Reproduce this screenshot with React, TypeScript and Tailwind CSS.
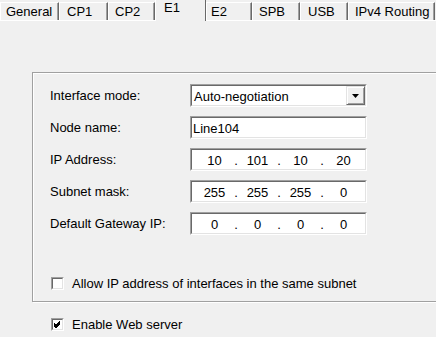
import { ReactNode } from "react";

type Tab = { label: string; width: number; pad: number; active?: boolean };

const tabs: Tab[] = [
  { label: "General", width: 59, pad: 5 },
  { label: "CP1", width: 49, pad: 7 },
  { label: "CP2", width: 47, pad: 6 },
  { label: "E1", width: 51, pad: 8, active: true },
  { label: "E2", width: 46, pad: 4 },
  { label: "SPB", width: 48, pad: 6 },
  { label: "USB", width: 48, pad: 7 },
  { label: "IPv4 Routing", width: 87, pad: 6 },
];

const Sunken = ({ width, children }: { width: number; children: ReactNode }) => (
  <div
    className="h-[23px] border border-t-[#a0a0a0] border-l-[#a0a0a0] border-b-white border-r-white"
    style={{ width }}
  >
    <div className="relative h-full border border-t-[#696969] border-l-[#696969] border-b-[#e3e3e3] border-r-[#e3e3e3] bg-white">
      {children}
    </div>
  </div>
);

const IpBox = ({ parts }: { parts: string[] }) => (
  <Sunken width={177}>
    <div className="flex h-full pl-[1px] pt-[3px] leading-[15px]">
      {parts.map((part, i) => (
        <div key={i} className="flex">
          {i > 0 ? (
            <span className="flex w-0 justify-center">
              <span>.</span>
            </span>
          ) : null}
          <span className="w-[43px] text-center">{part}</span>
        </div>
      ))}
    </div>
  </Sunken>
);

const Checkbox = ({ checked }: { checked?: boolean }) => (
  <div className="h-[13px] w-[13px] shrink-0 border border-t-[#a0a0a0] border-l-[#a0a0a0] border-b-white border-r-white">
    <div className="h-full w-full border border-t-[#696969] border-l-[#696969] border-b-[#e3e3e3] border-r-[#e3e3e3] bg-white">
      {checked ? (
        <svg width="9" height="9" viewBox="0 0 9 9" className="block">
          <path d="M1 3.5 L3 5.5 L7 1.5 M1 4.5 L3 6.5 L7 2.5 M1 5.5 L3 7.5 L7 3.5" stroke="#000" strokeWidth="1" fill="none" shapeRendering="crispEdges" />
        </svg>
      ) : null}
    </div>
  </div>
);

const Row = ({ label, children }: { label: string; children: ReactNode }) => (
  <div className="flex items-start">
    <span className="w-[140px] pt-[4px] leading-[15px]">{label}</span>
    {children}
  </div>
);

export default function App() {
  return (
    <div className="relative h-[337px] w-[436px] overflow-hidden bg-[#f0f0f0] font-['Liberation_Sans',Arial,sans-serif] text-[13px] text-black">
      <div className="flex h-[21px] items-end border-b border-white">
        {tabs.map((tab) =>
          tab.active ? (
            <div
              key={tab.label}
              className="relative z-10 -mb-[1px] h-[22px] border-l border-t border-white border-r border-r-[#696969] bg-[#f0f0f0] pt-[0px] leading-[15px]"
              style={{ width: tab.width, paddingLeft: tab.pad }}
            >
              {tab.label}
            </div>
          ) : (
            <div
              key={tab.label}
              className="h-[18px] border-l border-t border-white border-r border-r-[#696969] pt-[1px] leading-[15px] shadow-[inset_-1px_0_0_#a0a0a0]"
              style={{ width: tab.width, paddingLeft: tab.pad }}
            >
              {tab.label}
            </div>
          ),
        )}
      </div>

      <div className="ml-[32px] mt-[51px] h-[230px] w-[420px] border border-[#a0a0a0] pl-[17px] pt-[11px] shadow-[inset_1px_1px_0_#fff,1px_1px_0_#fff]">
        <div className="flex flex-col gap-[9px]">
          <Row label="Interface mode:">
            <Sunken width={177}>
              <div className="pl-[2px] pt-[3px] leading-[15px]">Auto-negotiation</div>
              <div className="absolute right-0 top-0 flex h-[19px] w-[19px] items-center justify-center border border-t-[#e3e3e3] border-l-[#e3e3e3] border-b-[#696969] border-r-[#696969] bg-[#f0f0f0] shadow-[inset_1px_1px_0_#fff,inset_-1px_-1px_0_#a0a0a0]">
                <svg width="7" height="4" viewBox="0 0 7 4" className="block">
                  <path d="M0 0 H7 L3.5 4 Z" fill="#000" />
                </svg>
              </div>
            </Sunken>
          </Row>
          <Row label="Node name:">
            <Sunken width={177}>
              <div className="pl-[1px] pt-[3px] leading-[15px]">Line104</div>
            </Sunken>
          </Row>
          <Row label="IP Address:">
            <IpBox parts={["10", "101", "10", "20"]} />
          </Row>
          <Row label="Subnet mask:">
            <IpBox parts={["255", "255", "255", "0"]} />
          </Row>
          <Row label="Default Gateway IP:">
            <IpBox parts={["0", "0", "0", "0"]} />
          </Row>
        </div>

        <div className="ml-[1px] mt-[41px] flex h-[15px] items-center gap-[8px] leading-[15px]">
          <Checkbox />
          <span>Allow IP address of interfaces in the same subnet</span>
        </div>
      </div>

      <div className="ml-[51px] mt-[15px] flex h-[15px] items-center gap-[8px] leading-[15px]">
        <Checkbox checked />
        <span>Enable Web server</span>
      </div>
    </div>
  );
}
